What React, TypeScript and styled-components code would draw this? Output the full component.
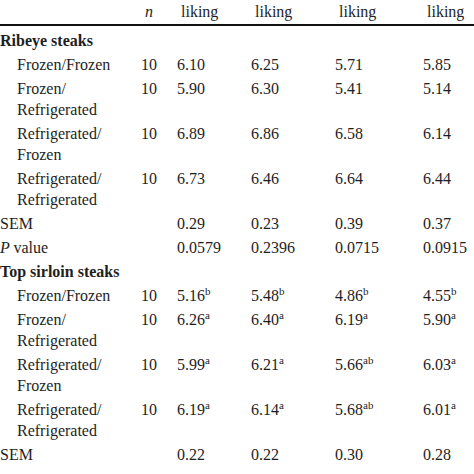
import styled, { createGlobalStyle } from "styled-components";

const GlobalStyle = createGlobalStyle`
  html, body {
    margin: 0;
    padding: 0;
    background: #ffffff;
  }
  body {
    font-family: "Liberation Serif", "DejaVu Serif", serif;
    color: #1e1e1e;
  }
`;

type Cell = { v: string; sup?: string };
type Row = { label: string[]; n?: string; values: Cell[]; indent?: boolean; italicP?: boolean };

const ribeye: Row[] = [
  { label: ["Frozen/Frozen"], n: "10", values: [{ v: "6.10" }, { v: "6.25" }, { v: "5.71" }, { v: "5.85" }], indent: true },
  { label: ["Frozen/", "Refrigerated"], n: "10", values: [{ v: "5.90" }, { v: "6.30" }, { v: "5.41" }, { v: "5.14" }], indent: true },
  { label: ["Refrigerated/", "Frozen"], n: "10", values: [{ v: "6.89" }, { v: "6.86" }, { v: "6.58" }, { v: "6.14" }], indent: true },
  { label: ["Refrigerated/", "Refrigerated"], n: "10", values: [{ v: "6.73" }, { v: "6.46" }, { v: "6.64" }, { v: "6.44" }], indent: true },
  { label: ["SEM"], values: [{ v: "0.29" }, { v: "0.23" }, { v: "0.39" }, { v: "0.37" }] },
  { label: ["value"], italicP: true, values: [{ v: "0.0579" }, { v: "0.2396" }, { v: "0.0715" }, { v: "0.0915" }] },
];

const sirloin: Row[] = [
  { label: ["Frozen/Frozen"], n: "10", values: [{ v: "5.16", sup: "b" }, { v: "5.48", sup: "b" }, { v: "4.86", sup: "b" }, { v: "4.55", sup: "b" }], indent: true },
  { label: ["Frozen/", "Refrigerated"], n: "10", values: [{ v: "6.26", sup: "a" }, { v: "6.40", sup: "a" }, { v: "6.19", sup: "a" }, { v: "5.90", sup: "a" }], indent: true },
  { label: ["Refrigerated/", "Frozen"], n: "10", values: [{ v: "5.99", sup: "a" }, { v: "6.21", sup: "a" }, { v: "5.66", sup: "ab" }, { v: "6.03", sup: "a" }], indent: true },
  { label: ["Refrigerated/", "Refrigerated"], n: "10", values: [{ v: "6.19", sup: "a" }, { v: "6.14", sup: "a" }, { v: "5.68", sup: "ab" }, { v: "6.01", sup: "a" }], indent: true },
  { label: ["SEM"], values: [{ v: "0.22" }, { v: "0.22" }, { v: "0.30" }, { v: "0.28" }] },
];

function Body({ title, rows, first }: { title: string; rows: Row[]; first?: boolean }) {
  return (
    <>
      <tr>
        <GroupCell colSpan={6} $first={first}>{title}</GroupCell>
      </tr>
      {rows.map((r, i) => (
        <tr key={i}>
          <LabelCell $indent={r.indent}>
            {r.italicP && <Italic>P </Italic>}
            {r.label.map((l, j) => (
              <span key={j}>
                {j > 0 && <br />}
                {l}
              </span>
            ))}
          </LabelCell>
          <ValueCell>{r.n}</ValueCell>
          {r.values.map((c, k) => (
            <ValueCell key={k}>
              {c.v}
              {c.sup && <Sup>{c.sup}</Sup>}
            </ValueCell>
          ))}
        </tr>
      ))}
    </>
  );
}

export default function App() {
  return (
    <>
      <GlobalStyle />
      <Page>
        <Table>
          <colgroup>
            <col style={{ width: 141 }} />
            <col style={{ width: 36 }} />
            <col style={{ width: 74 }} />
            <col style={{ width: 84 }} />
            <col style={{ width: 88 }} />
            <col style={{ width: 51 }} />
          </colgroup>
          <thead>
            <tr>
              <HeadCell />
              <HeadCell>
                <Italic>n</Italic>
              </HeadCell>
              <HeadCell>liking</HeadCell>
              <HeadCell>liking</HeadCell>
              <HeadCell>liking</HeadCell>
              <HeadCell>liking</HeadCell>
            </tr>
          </thead>
          <tbody>
            <Body title="Ribeye steaks" rows={ribeye} first />
            <Body title="Top sirloin steaks" rows={sirloin} />
          </tbody>
        </Table>
      </Page>
    </>
  );
}

const Page = styled.div`
  width: 474px;
  height: 474px;
  overflow: hidden;
  font-family: "Liberation Serif", "DejaVu Serif", serif;
`;

const Table = styled.table`
  width: 474px;
  table-layout: fixed;
  border-collapse: collapse;
  font-family: "Liberation Serif", "DejaVu Serif", serif;
  font-size: 16px;
  line-height: 21px;
  color: #1e1e1e;

  th,
  td {
    font-family: "Liberation Serif", "DejaVu Serif", serif;
  }
`;

const HeadCell = styled.th`
  text-align: left;
  font-weight: normal;
  padding: 1px 0 2px 4px;
  border-bottom: 2px solid #111;
  white-space: nowrap;
`;

const GroupCell = styled.td<{ $first?: boolean }>`
  font-weight: bold;
  padding: ${(p) => (p.$first ? "4px" : "1.5px")} 0 1.5px 0;
`;

const LabelCell = styled.td<{ $indent?: boolean }>`
  vertical-align: top;
  padding: 1.5px 0 1.5px ${(p) => (p.$indent ? "17px" : "0")};
  white-space: nowrap;
`;

const ValueCell = styled.td`
  vertical-align: top;
  padding: 1.5px 0;
  white-space: nowrap;
`;

const Italic = styled.i`
  font-style: italic;
`;

const Sup = styled.sup`
  font-size: 11px;
  line-height: 0;
  vertical-align: 6px;
`;
